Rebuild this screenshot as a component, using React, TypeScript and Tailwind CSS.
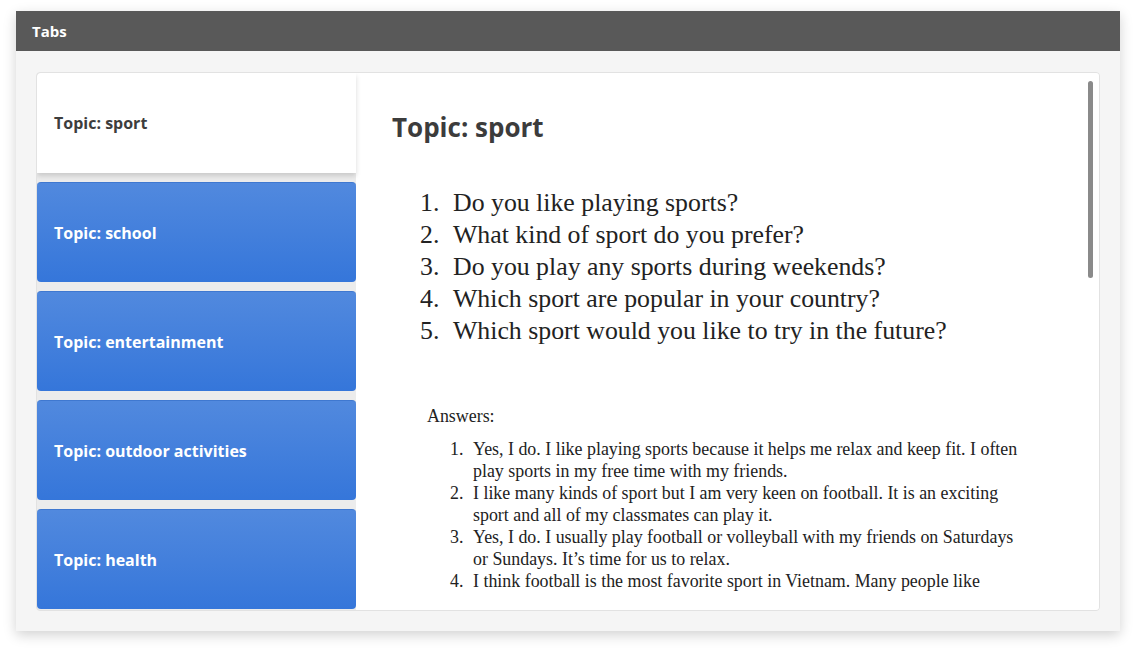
const tabs = ['Topic: sport', 'Topic: school', 'Topic: entertainment', 'Topic: outdoor activities', 'Topic: health']

const questions = [
  'Do you like playing sports?',
  'What kind of sport do you prefer?',
  'Do you play any sports during weekends?',
  'Which sport are popular in your country?',
  'Which sport would you like to try in the future?',
]

// each answer as the lines it wraps into
const answers = [
  ['Yes, I do. I like playing sports because it helps me relax and keep fit. I often', 'play sports in my free time with my friends.'],
  ['I like many kinds of sport but I am very keen on football. It is an exciting', 'sport and all of my classmates can play it.'],
  ['Yes, I do. I usually play football or volleyball with my friends on Saturdays', 'or Sundays. It\u2019s time for us to relax.'],
  ['I think football is the most favorite sport in Vietnam. Many people like'],
]

export default function App() {
  return (
    <main className="h-[652px] w-[1136px] bg-white pt-[11px] pl-[16px]" style={{ fontFamily: '"Open Sans", sans-serif' }}>
      <div className="w-[1104px] h-[620px] bg-[#f5f5f5] shadow-[0_4px_12px_rgba(0,0,0,0.18)] flex flex-col">
        <div className="h-[40px] bg-[#595959] flex items-center px-4">
          <h1 className="text-white font-bold text-[15px]">Tabs</h1>
        </div>
        <div className="flex-1 px-5 pt-[21px] pb-[20px]">
          <div className="h-[539px] flex rounded border border-[#e2e2e2] bg-[#ececec] overflow-hidden">
            <div className="w-[319px] flex flex-col gap-[9px]">
              {tabs.map((t, i) =>
                i === 0 ? (
                  <div key={t} className="h-[100px] bg-white flex items-center pl-[17px] rounded-tl shadow-[0_3px_5px_rgba(0,0,0,0.15)] relative z-10">
                    <span className="font-bold text-[16px] text-[#3d3d3d]">{t}</span>
                  </div>
                ) : (
                  <div key={t} className="h-[100px] bg-gradient-to-b from-[#5189de] to-[#3576da] border-t border-[#3f78d0] rounded flex items-center pl-[17px]">
                    <span className="font-bold text-[16px] text-white">{t}</span>
                  </div>
                )
              )}
            </div>
            <div className="flex-1 bg-white relative overflow-hidden pl-9 pt-[36px]">
              <h2 className="font-bold text-[26px] text-[#3c3c3c] leading-[36px]">Topic: sport</h2>
              <div style={{ fontFamily: '"Liberation Serif", serif' }} className="text-[#222]">
                <ol className="mt-[42px] text-[25.8px] leading-[32px]">
                  {questions.map((q, i) => (
                    <li key={q} className="flex">
                      <span className="w-[33px] pl-[28px] box-content">{i + 1}.</span>
                      <span>{q}</span>
                    </li>
                  ))}
                </ol>
                <p className="mt-[58px] pl-[35px] text-[17.9px] leading-[22px]">Answers:</p>
                <ol className="mt-[11px] text-[17.9px] leading-[22px]">
                  {answers.map((a, i) => (
                    <li key={i} className="flex">
                      <span className="w-[23px] pl-[58px] box-content">{i + 1}.</span>
                      <span className="whitespace-nowrap">
                        {a.map((line, j) => (
                          <span key={j} className="block">{line}</span>
                        ))}
                      </span>
                    </li>
                  ))}
                </ol>
              </div>
              <div className="absolute right-[6px] top-[8px] w-[5px] h-[197px] rounded-full bg-[#8a8a8a]" />
            </div>
          </div>
        </div>
      </div>
    </main>
  )
}
